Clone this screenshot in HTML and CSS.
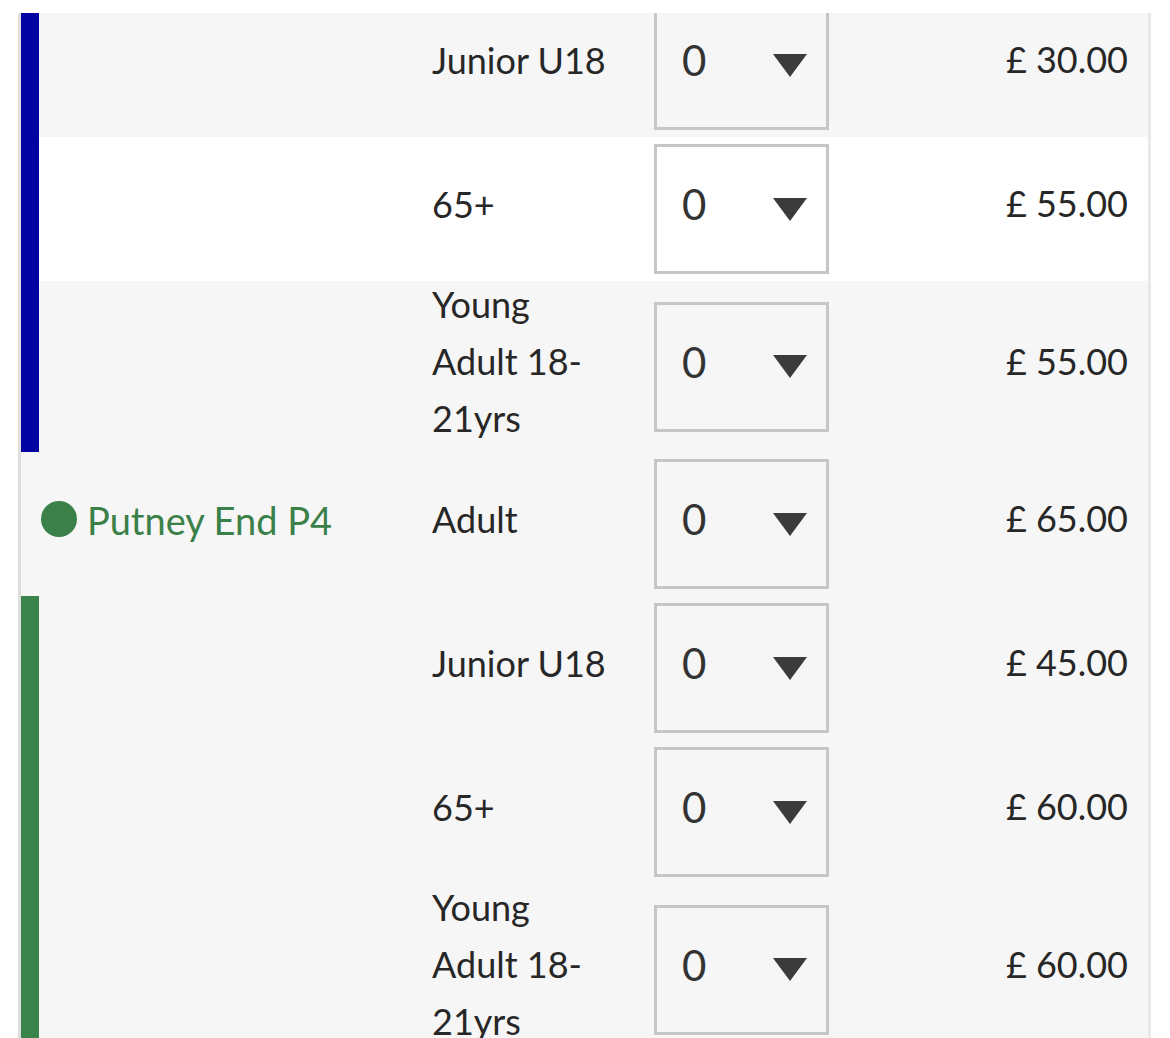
FILE: index.html
```html
<!DOCTYPE html>
<html lang="en">
<head>
<meta charset="utf-8">
<title>Tickets</title>
<link rel="stylesheet" href="styles.css">
</head>
<body>
<div class="panel">
  <div class="rows">
    <div class="row row-grey row-first">
      <div class="bar bar-blue"></div>
      <div class="zone"></div>
      <div class="label">Junior U18</div>
      <div class="qty"><span class="qty-val">0</span><svg class="caret" viewBox="0 0 34 23"><path d="M0 0H34L17 23Z"/></svg></div>
      <div class="price">£ 30.00</div>
    </div>
    <div class="row row-white">
      <div class="bar bar-blue"></div>
      <div class="zone"></div>
      <div class="label">65+</div>
      <div class="qty"><span class="qty-val">0</span><svg class="caret" viewBox="0 0 34 23"><path d="M0 0H34L17 23Z"/></svg></div>
      <div class="price">£ 55.00</div>
    </div>
    <div class="row row-grey">
      <div class="bar bar-blue"></div>
      <div class="zone"></div>
      <div class="label label-wrap">Young Adult 18-21yrs</div>
      <div class="qty"><span class="qty-val">0</span><svg class="caret" viewBox="0 0 34 23"><path d="M0 0H34L17 23Z"/></svg></div>
      <div class="price">£ 55.00</div>
    </div>
    <div class="row row-grey">
      <div class="bar"></div>
      <div class="zone zone-green"><span class="dot dot-green"></span><span class="zone-name">Putney End P4</span></div>
      <div class="label">Adult</div>
      <div class="qty"><span class="qty-val">0</span><svg class="caret" viewBox="0 0 34 23"><path d="M0 0H34L17 23Z"/></svg></div>
      <div class="price">£ 65.00</div>
    </div>
    <div class="row row-grey">
      <div class="bar bar-green"></div>
      <div class="zone"></div>
      <div class="label">Junior U18</div>
      <div class="qty"><span class="qty-val">0</span><svg class="caret" viewBox="0 0 34 23"><path d="M0 0H34L17 23Z"/></svg></div>
      <div class="price">£ 45.00</div>
    </div>
    <div class="row row-grey">
      <div class="bar bar-green"></div>
      <div class="zone"></div>
      <div class="label">65+</div>
      <div class="qty"><span class="qty-val">0</span><svg class="caret" viewBox="0 0 34 23"><path d="M0 0H34L17 23Z"/></svg></div>
      <div class="price">£ 60.00</div>
    </div>
    <div class="row row-grey">
      <div class="bar bar-green"></div>
      <div class="zone"></div>
      <div class="label label-wrap">Young Adult 18-21yrs</div>
      <div class="qty"><span class="qty-val">0</span><svg class="caret" viewBox="0 0 34 23"><path d="M0 0H34L17 23Z"/></svg></div>
      <div class="price">£ 60.00</div>
    </div>
  </div>
</div>
</body>
</html>
```
FILE: styles.css
```css
html, body {
  margin: 0;
  padding: 0;
  background: #ffffff;
  height: 1038px;
  overflow: hidden;
}

body {
  font-family: Lato, "Open Sans", "Liberation Sans", sans-serif;
  color: #272727;
  font-size: 36px;
}

.panel {
  margin: 13px 0 0 18px;
  width: 1127px;
  border-left: 3px solid #dedede;
  border-right: 3px solid #e9e9e9;
  height: 1025px;
  overflow: hidden;
}

.rows {
  display: flex;
  flex-direction: column;
}

.row {
  display: grid;
  grid-template-columns: 18px 393px 222px 175px 1fr;
  align-items: center;
  min-height: 144px;
}

.row-first {
  margin-top: -20px;
}

.row-grey {
  background: #f6f6f6;
}

.row-white {
  background: #ffffff;
}

.bar {
  align-self: stretch;
}

.bar-blue {
  background: #0303a1;
}

.bar-green {
  background: #3a844b;
}

.zone {
  display: flex;
  align-items: center;
  gap: 10px;
  padding-left: 2px;
  white-space: nowrap;
  margin-top: -10px;
}

.zone-green {
  color: #3a8048;
}

.zone-name {
  font-size: 38px;
  margin-top: 2px;
}

.dot {
  width: 36px;
  height: 36px;
  border-radius: 50%;
  flex: none;
}

.dot-green {
  background: #3a8048;
}

.label {
  line-height: 57px;
  padding-right: 10px;
  margin-top: -10px;
  margin-bottom: 0;
  padding-bottom: 0;
}

.label-wrap {
  width: 170px;
  margin-top: -5px;
  margin-bottom: 5px;
}

.qty {
  box-sizing: border-box;
  height: 130px;
  border: 3px solid #c6c6c6;
  display: flex;
  align-items: center;
  justify-content: space-between;
  padding: 0 19px 0 25px;
  color: #333333;
}

.qty-val {
  font-size: 42px;
  line-height: 1;
  margin-top: -10px;
}

.caret {
  width: 34px;
  height: 23px;
  fill: #3b3b3b;
}

.price {
  text-align: right;
  padding-right: 20px;
  margin-top: -12px;
}
```
